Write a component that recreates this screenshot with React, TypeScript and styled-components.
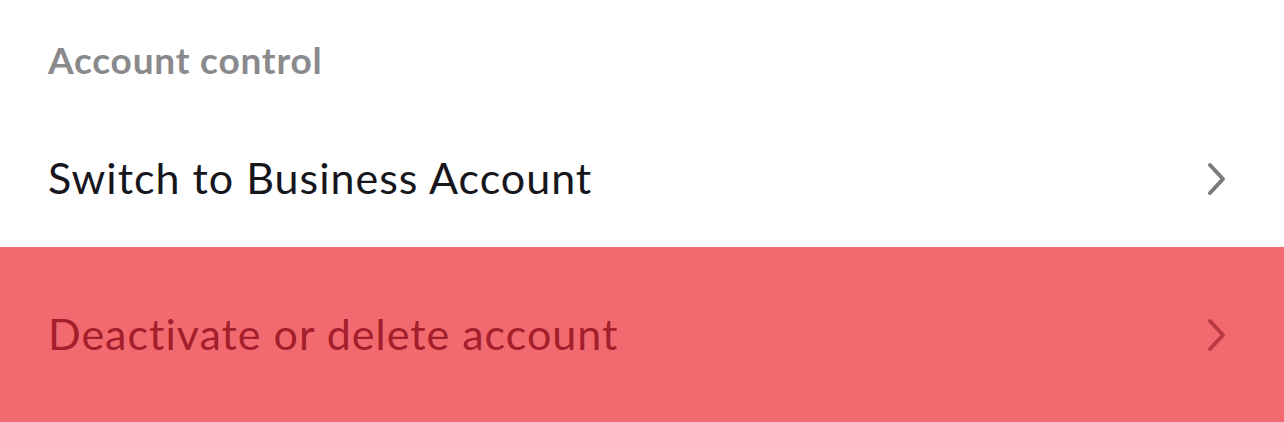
import styled, { createGlobalStyle } from "styled-components";

const GlobalStyle = createGlobalStyle`
  html, body {
    margin: 0;
    padding: 0;
    background: #ffffff;
  }
  body {
    font-family: Lato, "Open Sans", sans-serif;
  }
`;

function Chevron({ color }: { color: string }) {
  return (
    <svg width="22" height="34" viewBox="0 0 22 34" fill="none">
      <path
        d="M4 3 L17 17 L4 31"
        stroke={color}
        strokeWidth="4"
        strokeLinecap="round"
        strokeLinejoin="round"
      />
    </svg>
  );
}

export default function App() {
  return (
    <>
      <GlobalStyle />
      <Page>
        <SectionTitle>Account control</SectionTitle>
        <Row>
          <RowLabel>Switch to Business Account</RowLabel>
          <Chevron color="#7a7a7c" />
        </Row>
        <Row $danger>
          <RowLabel $danger>Deactivate or delete account</RowLabel>
          <Chevron color="#b83a44" />
        </Row>
      </Page>
    </>
  );
}

const Page = styled.div`
  width: 1284px;
  height: 422px;
  overflow: hidden;
  display: flex;
  flex-direction: column;
  background: #ffffff;
`;

const SectionTitle = styled.div`
  height: 110px;
  box-sizing: border-box;
  padding: 37px 48px 0;
  font-size: 37px;
  font-weight: 700;
  color: #8a8a8c;
  line-height: 46px;
  letter-spacing: 0.8px;
`;

const Row = styled.div<{ $danger?: boolean }>`
  display: flex;
  align-items: center;
  justify-content: space-between;
  height: ${(p) => (p.$danger ? "175px" : "137px")};
  padding: 0 56px 0 48px;
  box-sizing: border-box;
  background: ${(p) => (p.$danger ? "#f26a70" : "#ffffff")};
  flex-shrink: 0;
`;

const RowLabel = styled.span<{ $danger?: boolean }>`
  font-size: 43px;
  font-weight: 400;
  color: ${(p) => (p.$danger ? "#a41e2b" : "#16161c")};
  letter-spacing: 1px;
  margin-top: -3px;
`;
